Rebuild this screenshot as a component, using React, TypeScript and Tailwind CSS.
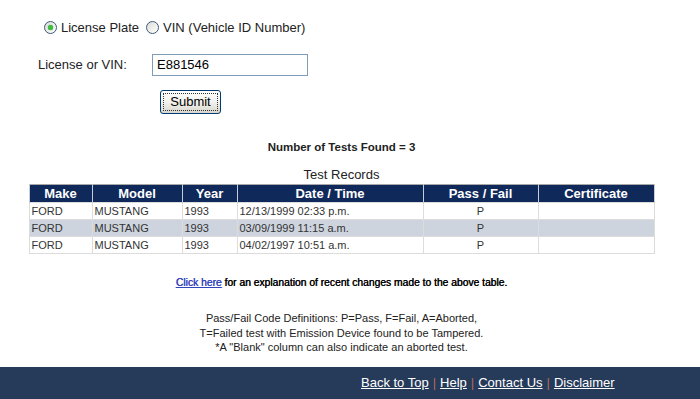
import React from "react";

const rows = [
  ["FORD", "MUSTANG", "1993", "12/13/1999 02:33 p.m.", "P", ""],
  ["FORD", "MUSTANG", "1993", "03/09/1999 11:15 a.m.", "P", ""],
  ["FORD", "MUSTANG", "1993", "04/02/1997 10:51 a.m.", "P", ""],
];

function Radio({ checked }: { checked?: boolean }) {
  return (
    <span className="relative inline-flex h-[13px] w-[13px] items-center justify-center rounded-full border border-[#3c5a7a] bg-gradient-to-br from-[#dcdcd6] to-[#ffffff]">
      {checked && (
        <span className="h-[5px] w-[5px] rounded-full bg-[#3fbf3f] shadow-[0_0_1px_#1a8a1a]" />
      )}
    </span>
  );
}

export default function App() {
  const font = { fontFamily: '"Liberation Sans", Arial, sans-serif' };
  return (
    <div className="relative h-[399px] w-[700px] overflow-hidden bg-white" style={font}>
      <div className="w-[683px]">
        {/* radio row */}
        <div className="flex h-[54px] items-start pt-[20px] pl-[44px] text-[13px] text-[#222]">
          <div className="flex items-center gap-[4px] leading-[15px]">
            <Radio checked />
            <span>License Plate</span>
            <span className="ml-[3px] inline-flex">
              <Radio />
            </span>
            <span>VIN (Vehicle ID Number)</span>
          </div>
        </div>
        {/* license row */}
        <div className="flex h-[36px] items-start text-[13px] text-[#222]">
          <span className="ml-[38px] mt-[3px] w-[114px] leading-[15px]">License or VIN:</span>
          <div className="flex h-[22px] w-[156px] items-center border border-[#7f9db9] bg-white pl-[4px] text-[13px] text-black">
            E881546
          </div>
        </div>
        {/* submit */}
        <div className="flex h-[46px] items-start pl-[160px]">
          <div className="flex h-[24px] w-[61px] items-center justify-center rounded-[3px] border border-[#003c74] bg-gradient-to-b from-[#ffffff] via-[#f2f2ee] to-[#d8d6cc] p-[2px]">
            <div className="flex h-full w-full items-center justify-center border border-dotted border-[#333] text-[13px] text-black">
              Submit
            </div>
          </div>
        </div>
        {/* counts */}
        <div className="flex h-[20px] items-center justify-center pt-[4px] text-[11.5px] font-bold text-[#222]">
          Number of Tests Found = 3
        </div>
        <div className="flex h-[28px] items-end justify-center pb-[2px] text-[13px] leading-[15px] text-[#222]">
          Test Records
        </div>
        {/* table */}
        <div className="flex justify-center">
          <table className="w-[625px] table-fixed border-collapse border border-[#a8a8a8] text-[11px] text-[#333]">
            <colgroup>
              <col className="w-[63px]" />
              <col className="w-[90px]" />
              <col className="w-[55px]" />
              <col className="w-[186px]" />
              <col className="w-[115px]" />
              <col className="w-[116px]" />
            </colgroup>
            <thead>
              <tr className="h-[18px] bg-[#10295b] text-[13px] font-bold text-white">
                {["Make", "Model", "Year", "Date / Time", "Pass / Fail", "Certificate"].map((h) => (
                  <th key={h} className="border-x border-[#c8ccd4] p-0 text-center leading-[17px]">
                    {h}
                  </th>
                ))}
              </tr>
            </thead>
            <tbody>
              {rows.map((r, i) => (
                <tr key={i} className={`h-[17px] ${i === 1 ? "bg-[#cdd4de]" : "bg-white"}`}>
                  {r.map((c, j) => (
                    <td
                      key={j}
                      className={`border border-[#dcdcdc] p-0 leading-[16px] ${j === 4 ? "text-center" : "pl-[2px] text-left"}`}
                    >
                      {c}
                    </td>
                  ))}
                </tr>
              ))}
            </tbody>
          </table>
        </div>
        {/* click here */}
        <div className="mt-[22px] flex justify-center text-[10.3px] leading-[14px] text-black [text-shadow:0.35px_0_0_#000]">
          <span>
            <a href="#" className="text-[#3344bb] underline [text-shadow:0.35px_0_0_#3344bb]">Click here</a> for an explanation of recent changes made to the above table.
          </span>
        </div>
        {/* definitions */}
        <div className="mt-[21px] flex flex-col items-center text-[11px] leading-[14.5px] text-[#222]">
          <span>Pass/Fail Code Definitions: P=Pass, F=Fail, A=Aborted,</span>
          <span>T=Failed test with Emission Device found to be Tampered.</span>
          <span>*A "Blank" column can also indicate an aborted test.</span>
        </div>
      </div>
      {/* footer */}
      <div className="absolute bottom-0 left-0 flex h-[32px] w-[700px] items-center bg-[#263a5a] pl-[361px] text-[13px] text-white">
        <a href="#" className="underline">Back to Top</a>
        <span className="mx-[4px] text-[#b06a5c]">|</span>
        <a href="#" className="underline">Help</a>
        <span className="mx-[4px] text-[#b06a5c]">|</span>
        <a href="#" className="underline">Contact Us</a>
        <span className="mx-[4px] text-[#b06a5c]">|</span>
        <a href="#" className="underline">Disclaimer</a>
      </div>
    </div>
  );
}
